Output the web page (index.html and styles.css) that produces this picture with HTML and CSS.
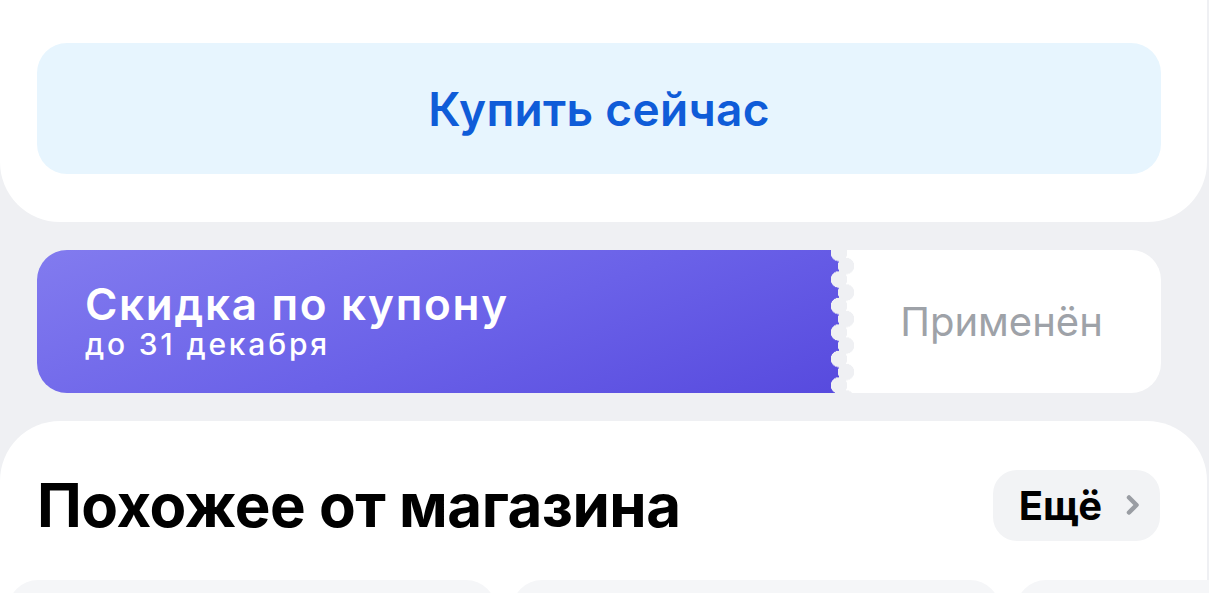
FILE: index.html
```html
<!DOCTYPE html>
<html lang="ru">
<head>
    <meta charset="UTF-8">
    <meta name="viewport" content="width=device-width, initial-scale=1.0">
    <title>Товар</title>
    <link rel="stylesheet" href="styles.css">
</head>
<body>
    <div class="buy-block">
        <button class="btn-buy">Купить сейчас</button>
    </div>

    <div class="coupon">
        <div class="coupon-main">
            <div class="coupon-title">Скидка по купону</div>
            <div class="coupon-date">до 31 декабря</div>
        </div>
        <div class="coupon-side">Применён</div>
        <div class="coupon-perf"></div>
    </div>

    <div class="similar">
        <div class="similar-head">
            <h2>Похожее от магазина</h2>
            <button class="btn-more">
                Ещё
                <svg width="16" height="24" viewBox="0 0 16 24"><path d="M4 4.5l7.5 7.5L4 19.5" fill="none" stroke="#9a9da3" stroke-width="4.5" stroke-linecap="round" stroke-linejoin="round"/></svg>
            </button>
        </div>
        <div class="similar-list">
            <div class="item-card"></div>
            <div class="item-card"></div>
            <div class="item-card"></div>
        </div>
    </div>
</body>
</html>
```

FILE: styles.css
```css
body { margin: 0; background: #eff0f3; font-family: Inter, "Noto Sans", sans-serif; overflow: hidden; height: 593px; }
button { border: none; cursor: pointer; font-family: inherit; }

.buy-block { background: #fff; border-radius: 0 0 60px 60px; margin-right: 2px; padding: 43px 46px 48px 37px; }
.btn-buy { display: block; width: 100%; height: 131px; border-radius: 30px; background: #e7f5fe; color: #0f5cd8; font-size: 46px; font-weight: 600; letter-spacing: 0.3px; }

.coupon { position: relative; display: flex; height: 143px; margin: 28px 48px 28px 37px; }
.coupon-main { flex: 1; display: flex; flex-direction: column; justify-content: center; padding: 0 0 0 48px; border-radius: 30px 0 0 30px; background: linear-gradient(160deg, #827bef 0%, #6a61e8 55%, #574ade 100%); color: #fff; }
.coupon-title { font-size: 44px; font-weight: 600; line-height: 44px; letter-spacing: 1.7px; }
.coupon-date { font-size: 30px; font-weight: 500; line-height: 36px; letter-spacing: 2.8px; }
.coupon-side { width: 319px; display: flex; align-items: center; justify-content: center; border-radius: 0 30px 30px 0; background: #fff; color: #9ea2a8; font-size: 40px; }
/* perforated seam between the two halves */
.coupon-perf { position: absolute; top: 0; bottom: 0; left: 792px; width: 26px;
    background:
        radial-gradient(circle at 10px 13px, #eff0f3 8px, transparent 8.5px) 0 -10px / 26px 26.5px repeat-y,
        radial-gradient(circle at 17px 13px, #eff0f3 8px, transparent 8.5px) 0 3px / 26px 26.5px repeat-y,
        linear-gradient(#eff0f3, #eff0f3) 10px 0 / 7px 100% no-repeat; }

.similar { background: #fff; border-radius: 60px 60px 0 0; margin-right: 2px; padding-top: 48px; height: 200px; }
.similar-head { display: flex; align-items: center; justify-content: space-between; padding: 0 47px 0 37px; }
.similar-head h2 { margin: 0; font-size: 60px; font-weight: 700; color: #000; letter-spacing: -0.5px; }
.btn-more { display: flex; align-items: center; gap: 23px; height: 71px; padding: 0 19px 0 26px; border-radius: 24px; background: #f2f3f5; color: #000; font-size: 40px; font-weight: 700; }

.similar-list { display: flex; gap: 16px; padding: 39px 0 0 8px; }
.item-card { flex: none; width: 488px; height: 120px; border-radius: 30px; background: #f5f6f8; }
```
